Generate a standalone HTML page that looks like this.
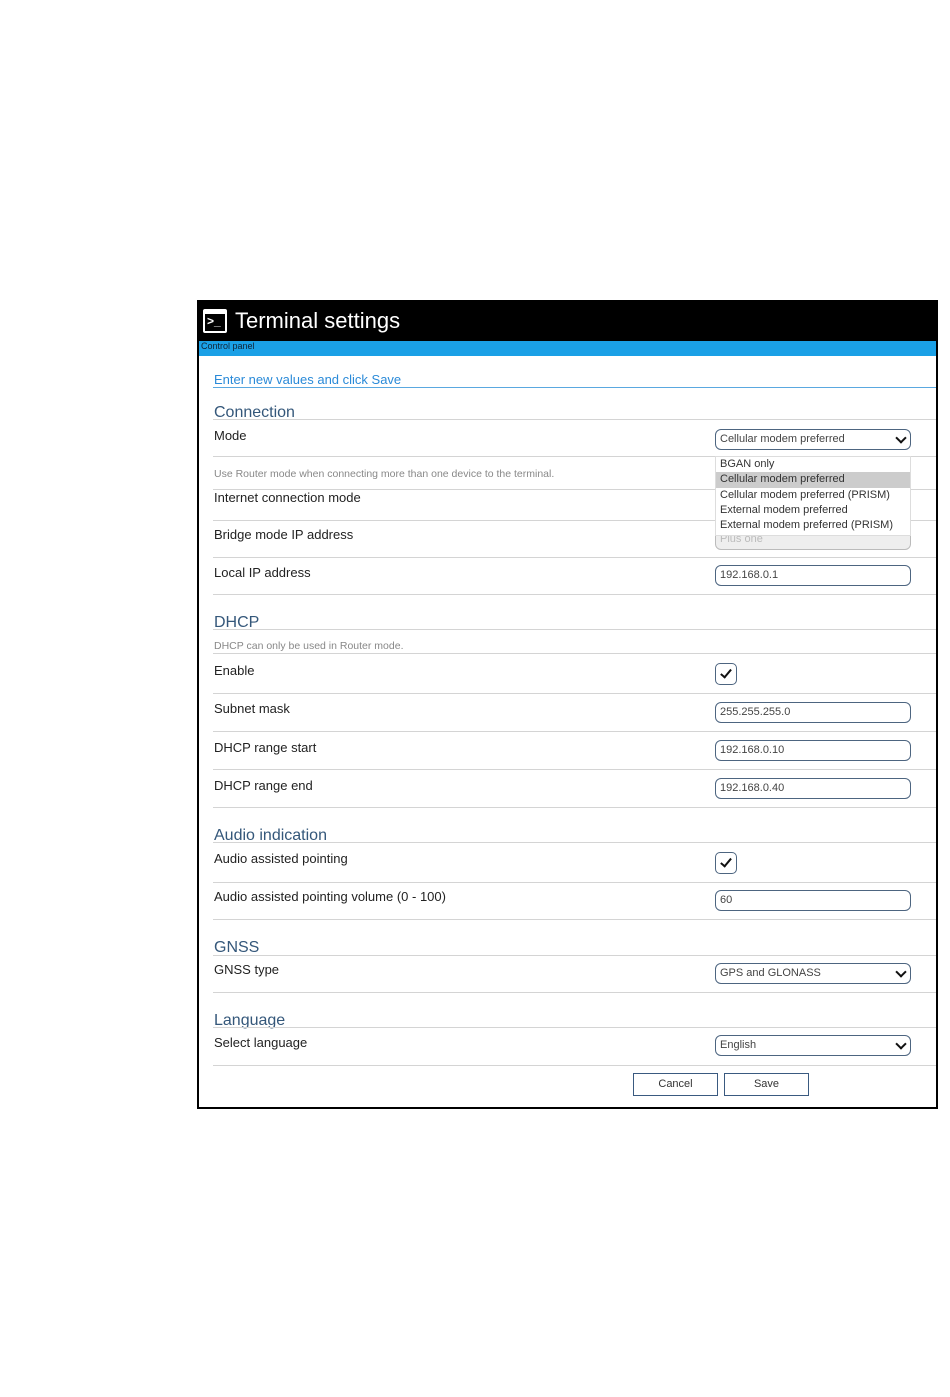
<!DOCTYPE html>
<html><head><meta charset="utf-8"><style>
body{margin:0;width:950px;height:1397px;background:#fff;position:relative;font-family:"Liberation Sans",sans-serif;overflow:hidden}
.a{position:absolute;white-space:nowrap}
.lbl{font-size:13px;color:#222;line-height:16px}
.sec{font-size:16px;color:#34577a;line-height:18px}
.hint{font-size:10.5px;color:#888;line-height:12px}
.ln{position:absolute;left:213px;width:723px;height:1px;background:#d4d4d4}
.inp{position:absolute;left:715px;height:19px;border:1.5px solid #4d6580;border-radius:6px;font-size:11px;line-height:19px;padding-left:4px;box-sizing:content-box;color:#444;width:190px}
.chev{position:absolute;right:5px;top:4px;width:6px;height:6px;border-right:2.5px solid #111;border-bottom:2.5px solid #111;transform:rotate(45deg)}
.cb{position:absolute;left:715px;width:20px;height:20px;border:1.5px solid #4d6580;border-radius:5px}
.cb:after{content:"";position:absolute;left:7px;top:3px;width:4px;height:9px;border-right:2px solid #111;border-bottom:2px solid #111;transform:rotate(40deg)}
.btn{position:absolute;top:1073px;width:83px;height:21px;border:1px solid #3a5a80;font-size:11px;text-align:center;line-height:21px;color:#333}
</style></head><body>
<div class="a" style="left:197px;top:300px;width:741px;height:809px;border:2px solid #000;border-top:none;box-sizing:border-box"></div>
<div class="a" style="left:197px;top:300px;width:741px;height:42px;background:#000"></div>
<div class="a" style="left:203px;top:309px;width:24px;height:24px;border:2px solid #fff;border-radius:2px;box-sizing:border-box;border-top-width:5px"></div>
<div class="a" style="left:207px;top:314px;color:#fff;font-size:12px;font-weight:bold;line-height:14px">&gt;_</div>
<div class="a" style="left:235px;top:308px;color:#fff;font-size:22px;line-height:26px">Terminal settings</div>
<div class="a" style="left:199px;top:341px;width:737px;height:15px;background:#1aa0e6"></div>
<div class="a" style="left:201px;top:341px;font-size:9px;line-height:11px;color:#123">Control panel</div>
<div class="a" style="left:214px;top:372px;font-size:13px;color:#2a8ad8;line-height:16px">Enter new values and click Save</div>
<div class="ln" style="top:387px;background:#5aa8e0"></div>

<div class="a sec" style="left:214px;top:404px">Connection</div><div class="ln" style="top:419px"></div>
<div class="a lbl" style="left:214px;top:428px">Mode</div>
<div class="inp" style="top:429px">Cellular modem preferred<div class="chev"></div></div>
<div class="ln" style="top:456px"></div>
<div class="a hint" style="left:214px;top:468px">Use Router mode when connecting more than one device to the terminal.</div>
<div class="ln" style="top:489px"></div>
<div class="a lbl" style="left:214px;top:490px">Internet connection mode</div>
<div class="ln" style="top:520px"></div>
<div class="a lbl" style="left:214px;top:527px">Bridge mode IP address</div>
<div class="inp" style="top:529px;border-color:#bbb;color:#bbb;background:#eee">Plus one</div>
<div class="a" style="left:715px;top:456px;width:194px;height:78px;background:#fff;border:1px solid #ddd;font-size:11px;color:#333;line-height:15.3px">
<div style="padding-left:4px">BGAN only</div>
<div style="padding-left:4px;background:#ccc">Cellular modem preferred</div>
<div style="padding-left:4px">Cellular modem preferred (PRISM)</div>
<div style="padding-left:4px">External modem preferred</div>
<div style="padding-left:4px">External modem preferred (PRISM)</div></div>
<div class="ln" style="top:557px"></div>
<div class="a lbl" style="left:214px;top:565px">Local IP address</div>
<div class="inp" style="top:565px">192.168.0.1</div>
<div class="ln" style="top:594px"></div>

<div class="a sec" style="left:214px;top:614px">DHCP</div><div class="ln" style="top:629px"></div>
<div class="a hint" style="left:214px;top:640px">DHCP can only be used in Router mode.</div>
<div class="ln" style="top:653px"></div>
<div class="a lbl" style="left:214px;top:663px">Enable</div>
<div class="cb" style="top:663px"></div>
<div class="ln" style="top:693px"></div>
<div class="a lbl" style="left:214px;top:701px">Subnet mask</div>
<div class="inp" style="top:702px">255.255.255.0</div>
<div class="ln" style="top:731px"></div>
<div class="a lbl" style="left:214px;top:740px">DHCP range start</div>
<div class="inp" style="top:740px">192.168.0.10</div>
<div class="ln" style="top:769px"></div>
<div class="a lbl" style="left:214px;top:778px">DHCP range end</div>
<div class="inp" style="top:778px">192.168.0.40</div>
<div class="ln" style="top:807px"></div>

<div class="a sec" style="left:214px;top:827px">Audio indication</div><div class="ln" style="top:842px"></div>
<div class="a lbl" style="left:214px;top:851px">Audio assisted pointing</div>
<div class="cb" style="top:852px"></div>
<div class="ln" style="top:882px"></div>
<div class="a lbl" style="left:214px;top:889px">Audio assisted pointing volume (0 - 100)</div>
<div class="inp" style="top:890px">60</div>
<div class="ln" style="top:919px"></div>

<div class="a sec" style="left:214px;top:939px">GNSS</div><div class="ln" style="top:955px"></div>
<div class="a lbl" style="left:214px;top:962px">GNSS type</div>
<div class="inp" style="top:963px">GPS and GLONASS<div class="chev"></div></div>
<div class="ln" style="top:992px"></div>

<div class="a sec" style="left:214px;top:1012px">Language</div><div class="ln" style="top:1027px"></div>
<div class="a lbl" style="left:214px;top:1035px">Select language</div>
<div class="inp" style="top:1035px">English<div class="chev"></div></div>
<div class="ln" style="top:1065px"></div>
<div class="btn" style="left:633px">Cancel</div>
<div class="btn" style="left:724px">Save</div>
</body></html>
